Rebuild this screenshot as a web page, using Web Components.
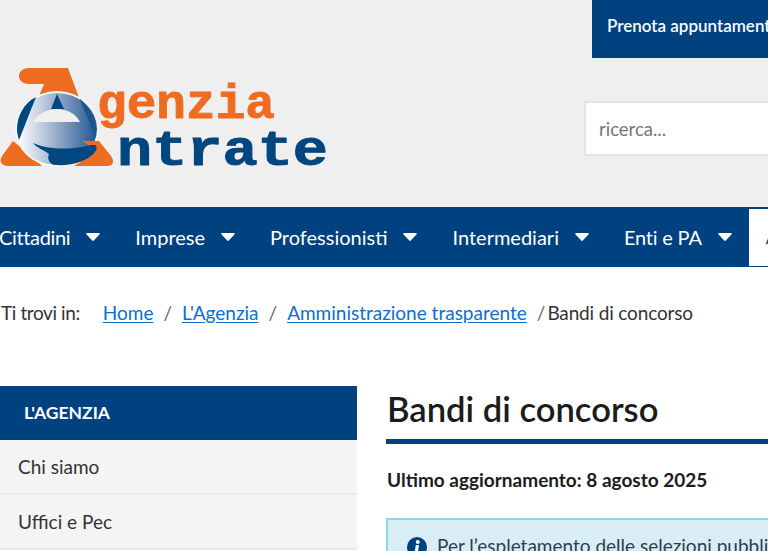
<!DOCTYPE html>
<html lang="it"><head><meta charset="utf-8"><title>Bandi di concorso</title>
<style>
html,body{margin:0;padding:0;height:551px;overflow:hidden;background:#fff;font-family:Lato,"Noto Sans",sans-serif;color:#333}
</style></head><body>
<site-header></site-header>
<main-nav>
  <nav-item first style="letter-spacing:-.35px">Cittadini</nav-item><nav-item>Imprese</nav-item><nav-item>Professionisti</nav-item><nav-item>Intermediari</nav-item><nav-item style="letter-spacing:-.2px">Enti e PA</nav-item>
</main-nav>
<bread-crumb></bread-crumb>
<page-body>
  <side-menu slot="side"></side-menu>
  <page-content></page-content>
</page-body>
<script>
function def(name,html){customElements.define(name,class extends HTMLElement{constructor(){super();this.attachShadow({mode:'open'}).innerHTML=html;}});}
def('agenzia-logo',`<style>:host{display:block;width:330px;height:102px}svg{display:block;filter:blur(.4px)}text{font-family:"Liberation Mono",monospace;font-weight:700;stroke-width:.9;stroke-linejoin:round}</style>
<svg width="330" height="102" viewBox="0 65 330 102" role="img" aria-label="Agenzia Entrate">
<defs><linearGradient id="g" x1="0" x2="1" y1="0" y2="0"><stop offset="0" stop-color="#fff"/><stop offset=".3" stop-color="#c3cfe0"/><stop offset=".65" stop-color="#7390b8"/><stop offset="1" stop-color="#1f5690"/></linearGradient></defs>
<path d="M28 68H68L81 103H36L44 84H28C23 84 19 80 19 76S23 68 28 68Z" fill="#ee6c21"/>
<path d="M13 141L24 150 42 166H8C1 166-1 161 2 156Z" fill="#ee6c21"/>
<path d="M82 141H99L111 156C115 162 113 166 107 166H74L92 155Z" fill="#ee6c21"/>
<ellipse cx="57" cy="129" rx="42" ry="38" fill="#f6f6f6"/>
<ellipse cx="57" cy="129" rx="40" ry="36" fill="url(#g)"/>
<path d="M36 97C24 103 17 116 17 129C17 133 18 137 19 140Z" fill="#00467f"/>
<path d="M80 99C90 107 96 120 96 138L80 100Z" fill="#1d5590"/>
<path d="M57 94L51 109H64Z" fill="#00467f"/>
<path d="M33 122C37 114 47 109 57 109S76 114 80 122Z" fill="#efefef"/>
<path d="M33 143C48 150 74 150 92 145C97 144 98 148 95 152C88 161 72 166 56 165C49 165 47 158 49 154C44 150 37 148 33 143Z" fill="#00467f"/>
<path d="M82 141H98L100 145 88 145Z" fill="#ee6c21"/>
<text x="97" y="118" font-size="49" textLength="178" lengthAdjust="spacingAndGlyphs" fill="#ee6c21" stroke="#ee6c21">genzia</text>
<text x="117" y="165" font-size="50" textLength="211" lengthAdjust="spacingAndGlyphs" fill="#00467f" stroke="#00467f">ntrate</text>
</svg>`);
def('site-header',`<style>:host{display:flex;height:207px;background:#efefef;justify-content:space-between;overflow:hidden}
agenzia-logo{margin-top:65px}
.r{width:184px;flex:none;display:flex;flex-direction:column;align-items:flex-end;overflow:hidden}
.b{box-sizing:border-box;width:176px;height:58px;background:#00417f;color:#fff;font:600 17px/52px Lato,sans-serif;padding-left:15px;white-space:nowrap;overflow:hidden}
.s{box-sizing:border-box;margin-top:43px;width:184px;height:55px;background:#fff;border:2px solid #e4e4e4;border-right:0;color:#777;font:18.500px/53px Lato,sans-serif;padding-left:13px;flex:none}
</style>
<agenzia-logo></agenzia-logo><div class="r"><div class="b">Prenota appuntamento</div><div class="s">ricerca...</div></div>`);
def('main-nav',`<style>:host{display:flex;height:60px;background:#00417f;overflow:hidden}
.w{flex:1;background:#fff;margin:2px 0 1px;color:#333;font:18px/57px Lato,sans-serif;padding-left:17px;overflow:hidden;white-space:nowrap}</style>
<slot></slot><div class="w">Area</div>`);
def('nav-item',`<style>:host{display:flex;align-items:center;flex:none;color:#fff;font:20px/1 Lato,sans-serif;padding:0 0 0 35px;height:60px;box-sizing:border-box;white-space:nowrap}
:host([first]){padding-left:0;margin-left:-1px}
:host(:nth-last-of-type(1)){padding-right:17px}
svg{margin-left:16px;flex:none}</style><slot></slot><svg width="14" height="8" viewBox="0 0 13 8" preserveAspectRatio="none"><path d="M1 0H12C13 0 13 1 12.500 1.500L7.200 7.500C6.800 8 6.200 8 5.800 7.500L.5 1.500C0 1 0 0 1 0Z" fill="#fff"/></svg>`);
def('bread-crumb',`<style>:host{display:flex;height:119px;padding:33px 0 0 1px;box-sizing:border-box;font:19px/26px Lato,sans-serif;color:#333;white-space:nowrap}
a{color:#0b6fd0;text-decoration:underline;text-underline-offset:2px}
.t{margin-right:23px;letter-spacing:-.4px}.sep{margin:0 10px;color:#666}.l{letter-spacing:-.15px}</style>
<span class="t">Ti trovi in:</span><a href="#">Home</a><span class="sep">/</span><a href="#">L'Agenzia</a><span class="sep">/</span><a href="#">Amministrazione trasparente</a><span class="sep" style="margin-right:2px">/</span><span class="l">Bandi di concorso</span>`);
def('page-body',`<style>:host{display:grid;grid-template-columns:357px 1fr;column-gap:29px;height:165px;overflow:hidden}</style><slot name="side"></slot><slot></slot>`);
def('side-menu',`<style>:host{display:block}
h2{margin:0;height:54px;background:#00417f;color:#fff;font:700 17.500px/54px Lato,sans-serif;padding-left:24px}
div{box-sizing:border-box;height:55px;background:#f4f4f4;border-bottom:2px solid #e9e9e9;padding-left:18px;font:19px/53px Lato,sans-serif;color:#333}</style>
<h2>L'AGENZIA</h2><div>Chi siamo</div><div>Uffici e Pec</div>`);
def('page-content',`<style>:host{display:block;min-width:0;overflow:hidden}
h1{margin:0;height:53px;border-bottom:5px solid #00417f;font:600 34.600px/45px Lato,sans-serif;color:#1c1c1c;white-space:nowrap;padding-left:1px}
p{margin:24px 0 26px;font:700 19px/24px Lato,sans-serif;color:#1c1c1c;padding-left:1px}
.a{background:#d9edf7;border-top:2px solid #8dd6e6;border-left:2px solid #8dd6e6;padding:13px 0 0 19px;height:60px;display:flex;gap:10px;font:19px/26px Lato,sans-serif;color:#2b3f4f;white-space:nowrap}
svg{flex:none;margin-top:4px}</style>
<h1>Bandi di concorso</h1><p>Ultimo aggiornamento: 8 agosto 2025</p>
<div class="a"><svg width="20" height="20" viewBox="0 0 20 20"><circle cx="10" cy="10" r="10" fill="#00417f"/><path d="M8.800 8H12L10.800 16H7.600Z" fill="#fff"/><circle cx="10.800" cy="5" r="2" fill="#fff"/></svg><span>Per l’espletamento delle selezioni pubbliche</span></div>`);
</script>
</body></html>
